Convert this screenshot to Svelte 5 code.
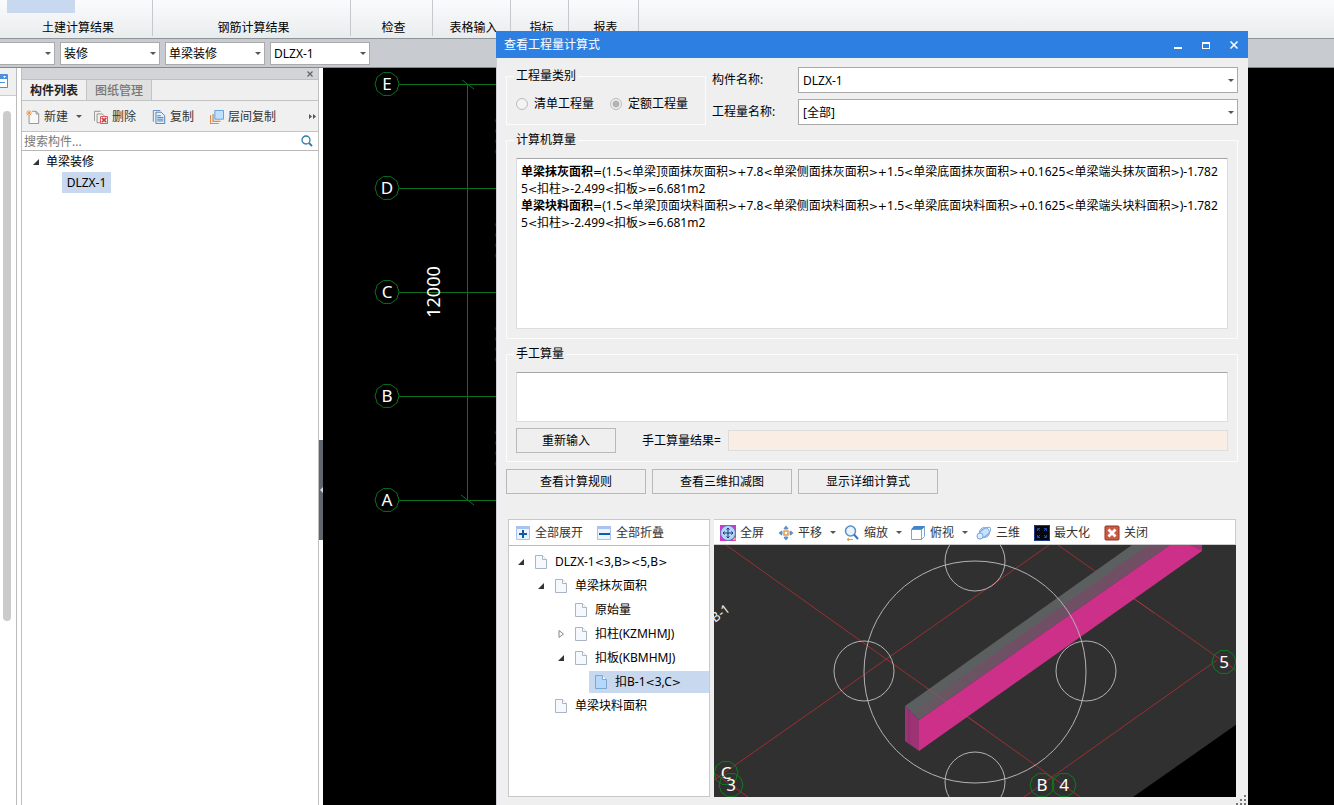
<script lang="ts">
  type Node = { label: string; depth: number; arrow?: 'open' | 'closed'; selected?: boolean };

  const ribbon = [
    { label: '土建计算结果', width: 153, active: true },
    { label: '钢筋计算结果', width: 198 },
    { label: '检查', width: 82 },
    { label: '表格输入', width: 78 },
    { label: '指标', width: 58 },
    { label: '报表', width: 70 },
  ];
  const filters = ['装修', '单梁装修', 'DLZX-1'];

  const formulas = [
    {
      name: '单梁抹灰面积',
      lines: ['=(1.5<单梁顶面抹灰面积>+7.8<单梁侧面抹灰面积>+1.5<单梁底面抹灰面积>+0.1625<单梁端头抹灰面积>)-1.782', '5<扣柱>-2.499<扣板>=6.681m2'],
    },
    {
      name: '单梁块料面积',
      lines: ['=(1.5<单梁顶面块料面积>+7.8<单梁侧面块料面积>+1.5<单梁底面块料面积>+0.1625<单梁端头块料面积>)-1.782', '5<扣柱>-2.499<扣板>=6.681m2'],
    },
  ];

  const nodes: Node[] = [
    { label: 'DLZX-1<3,B><5,B>', depth: 0, arrow: 'open' },
    { label: '单梁抹灰面积', depth: 1, arrow: 'open' },
    { label: '原始量', depth: 2 },
    { label: '扣柱(KZMHMJ)', depth: 2, arrow: 'closed' },
    { label: '扣板(KBMHMJ)', depth: 2, arrow: 'open' },
    { label: '扣B-1<3,C>', depth: 3, selected: true },
    { label: '单梁块料面积', depth: 1 },
  ];

  const panelTools = [
    { id: 'new', label: '新建', menu: true },
    { id: 'delete', label: '删除' },
    { id: 'copy', label: '复制' },
    { id: 'layer', label: '层间复制' },
  ];
  const viewTools = [
    { id: 'full', label: '全屏' },
    { id: 'pan', label: '平移', menu: true },
    { id: 'zoom', label: '缩放', menu: true },
    { id: 'top', label: '俯视', menu: true },
    { id: 'orbit', label: '三维' },
    { id: 'max', label: '最大化' },
    { id: 'close', label: '关闭' },
  ];

  const axes = ['E', 'D', 'C', 'B', 'A'].map((name, i) => ({ name, y: 16 + i * 104 }));
  const pins = [
    { name: 'C', x: 12, y: 228 },
    { name: '3', x: 17, y: 240 },
    { name: 'B', x: 328, y: 240 },
    { name: '4', x: 350, y: 240 },
    { name: '5', x: 510, y: 117 },
  ];

  let category = $state('quota');
  let manual = $state('');

  // operators are set in a wider face than the digits
  const parts = (text: string) => text.split(/([<>+=])/).filter(Boolean);
  const isOp = (part: string) => '<>+='.includes(part);

  // ten-sided axis bubble
  const bubble = (cx: number, cy: number) =>
    Array.from({ length: 10 }, (_, i) => {
      const a = (i * Math.PI) / 5;
      return `${(cx + 12 * Math.cos(a)).toFixed(1)},${(cy + 12 * Math.sin(a)).toFixed(1)}`;
    }).join(' ');
</script>

{#snippet expr(text: string)}{#each parts(text) as part}{#if isOp(part)}<span class="op">{part}</span>{:else}{part}{/if}{/each}{/snippet}

{#snippet twisty(open: boolean)}
  <svg class="twisty" width="8" height="8" viewBox="0 0 8 8">
    {#if open}
      <path d="M7 1v6H1z" fill="#333" />
    {:else}
      <path d="M2 .5v7L6.500 4z" fill="#fff" stroke="#888" />
    {/if}
  </svg>
{/snippet}

{#snippet icon(id: string)}
  <svg class="icon" width="16" height="16" viewBox="0 0 16 16" fill="none">
    {#if id === 'new'}
      <path d="M3.500 6v9.500h11V4.500l-3-3H7" fill="#f8f8f8" stroke="#888" />
      <path d="M11.500 1.500v3h3" stroke="#888" />
      <path d="M3.500 0v7M0 3.500h7M1 1l5 5M6 1L1 6" stroke="#e8954a" />
    {:else if id === 'delete'}
      <path d="M.5 12.500v-11h7M7 14.500H3.500v-10h6l3 3" stroke="#8a8a8a" />
      <path d="M7.500 7.500h8v8h-8z" fill="#fff" stroke="#cf3b3b" />
      <path d="M9 9l5 5M14 9l-5 5" stroke="#cf3b3b" stroke-width="2" />
    {:else if id === 'copy'}
      <path d="M1.500 13.500V.5h8" stroke="#4d7fb5" />
      <path d="M4.500 2.500h6l4 4v9h-10z" fill="#e6f2fd" stroke="#3d74b0" />
      <path d="M6 6.500h4M6 8.500h7M6 10.500h7M6 12.500h7" stroke="#3d74b0" />
    {:else if id === 'layer'}
      <path d="M.5 6v9.500H10M3.500 4.500v8.500H12" stroke="#dc8b4a" stroke-width="1.500" />
      <path d="M5.500.5h10v10h-10z" fill="#bfe0ff" stroke="#5695d8" />
    {:else if id === 'full'}
      <path d="M0 0h16v16H0z" fill="#d435cf" />
      <circle cx="8" cy="8" r="7.500" fill="#b7d3f4" stroke="#5e76b8" />
      <path d="M8 3v10M3 8h10M6.500 4.500L8 3l1.500 1.500M6.500 11.500L8 13l1.500-1.500M4.500 6.500L3 8l1.500 1.500M11.500 6.500L13 8l-1.500 1.500" stroke="#123a7c" />
      <path d="M13 14.500h2v-2" stroke="#ffb04b" stroke-width="1.500" />
    {:else if id === 'pan'}
      <path d="M6 6h4v4H6z" stroke="#e59a4c" stroke-width="1.500" />
      <path d="M8 .5l2.500 3-1 1h-3l-1-1zM8 15.500l2.500-3-1-1h-3l-1 1zM.5 8l3-2.500 1 1v3l-1 1zM15.500 8l-3-2.500-1 1v3l1 1z" fill="#5a90cb" />
    {:else if id === 'zoom'}
      <circle cx="6.500" cy="6" r="5" fill="#e7f3ff" stroke="#5b8dc5" stroke-width="1.500" />
      <path d="M10 9.500l4 4.500" stroke="#3d74b0" stroke-width="2" />
      <path d="M3 14.500h6M5 13l-2 1.500L5 16" stroke="#e59a4c" />
    {:else if id === 'top'}
      <path d="M1.500 4.500h10v10h-10zM11.500 4.500l3-3v10l-3 3" fill="#fff" stroke="#7da6d6" />
      <path d="M1 4.500l3-3.500h11l-3 3.500z" fill="#4383c9" />
    {:else if id === 'orbit'}
      <circle cx="8.500" cy="7.500" r="5" fill="#c6e0ff" stroke="#79a9df" />
      <ellipse cx="8" cy="8" rx="8" ry="3.500" transform="rotate(-38 8 8)" stroke="#79a9df" />
      <circle cx="4" cy="11" r="3" fill="#dcecff" stroke="#79a9df" />
    {:else if id === 'max'}
      <path d="M0 0h16v16H0z" fill="#05070d" />
      <path d="M3.500 6V3.500H6M10 3.500h2.500V6M12.500 10v2.500H10M6 12.500H3.500V10M4 4l2 2M12 4l-2 2M12 12l-2-2M4 12l2-2" stroke="#1f4fb5" />
      <path d="M.5.5h15v15H.5z" stroke="#173a8c" />
    {:else if id === 'close'}
      <rect x="1" y="1" width="14" height="14" rx="1" fill="#cf5a44" stroke="#8e3526" />
      <path d="M4.500 4.500l7 7M11.500 4.500l-7 7" stroke="#fff" stroke-width="2.800" />
    {/if}
  </svg>
{/snippet}

{#snippet page(selected: boolean)}
  <svg class="page" width="14" height="16" viewBox="0 0 14 16">
    <path d="M1.500 1.500h7l4 4v9h-11z" fill={selected ? '#b5d8fa' : '#f5f8fc'} stroke={selected ? '#7ba7d6' : '#a9b4c4'} />
    <path d="M8.500 1.500v4h4" fill="#fff" stroke={selected ? '#7ba7d6' : '#a9b4c4'} />
  </svg>
{/snippet}

<div class="app">
  <header class="ribbon">
    {#each ribbon as group}
      <div class="group" style:width="{group.width}px">
        {#if group.active}<span class="active"></span>{/if}
        <span class="group-name">{group.label}</span>
      </div>
    {/each}
  </header>

  <div class="filters">
    <label class="combo first"><select aria-label="楼层"><option></option></select></label>
    {#each filters as value}
      <label class="combo"><select aria-label={value}><option>{value}</option></select></label>
    {/each}
  </div>

  <main>
    <div class="rail">
      <div class="rail-head">
        <svg width="8" height="14" viewBox="0 0 8 14">
          <path d="M0 .5h7.500v13H0" fill="#fff" stroke="#4b8fdd" />
          <path d="M0 1h7v4H0zM0 8h5v1H0z" fill="#4b8fdd" />
          <path d="M3 2h3L4.500 4z" fill="#fff" />
        </svg>
      </div>
      <div class="thumb"></div>
    </div>

    <aside class="panel">
      <div class="panel-head">
        <button aria-label="关闭">
          <svg width="8" height="8" viewBox="0 0 8 8"><path d="M1.500 1.500l5 5M6.500 1.500l-5 5" stroke="#666" stroke-width="1.300" /></svg>
        </button>
      </div>
      <div class="tabs">
        <button class="tab current">构件列表</button>
        <button class="tab">图纸管理</button>
      </div>
      <div class="tools panel-tools">
        {#each panelTools as tool}
          <button class:menu={tool.menu}>{@render icon(tool.id)}{tool.label}</button>
        {/each}
        <svg class="more" width="8" height="7" viewBox="0 0 8 7"><path d="M0 1l3 2.500L0 6zM4 1l3 2.500L4 6z" fill="#555" /></svg>
      </div>
      <label class="search">
        <input type="text" placeholder="搜索构件..." aria-label="搜索构件" />
        <svg width="12" height="12" viewBox="0 0 12 12" fill="none">
          <circle cx="5" cy="5" r="4" stroke="#2d7dac" stroke-width="1.300" />
          <path d="M8 8l3 3" stroke="#2d7dac" stroke-width="1.800" />
        </svg>
      </label>
      <div class="parts">
        <div class="part-group">{@render twisty(true)}单梁装修</div>
        <div class="part">DLZX-1</div>
      </div>
    </aside>

    <div class="splitter">
      <svg width="4" height="100" viewBox="0 0 4 100"><path d="M0 0h4v100H0z" fill="#5f666e" /><path d="M4 47v6L1 50z" fill="#d5d9dd" /></svg>
    </div>

    <div class="canvas">
      <svg width="100%" height="100%">
        <g stroke="#0b7022" fill="none">
          {#each axes as axis}
            <polygon points={bubble(64, axis.y)} />
            <path d="M76 {axis.y + 0.5}H900" />
          {/each}
          <path d="M144.500 16V432M139 12l12 9M138 427l13 10" />
        </g>
        <g fill="#fff" text-anchor="middle">
          {#each axes as axis, i}
            <text x="64" y={axis.y + 6} font-size="17">{axis.name}</text>
            {#if i < 4}
              <text transform="translate(186 {axis.y + 52}) rotate(-90)" font-size="18">3000</text>
            {/if}
          {/each}
          <text transform="translate(117 224) rotate(-90)" font-size="18">12000</text>
        </g>
      </svg>
    </div>
  </main>

  <section class="dialog" role="dialog" aria-label="查看工程量计算式">
    <div class="title">
      <span>查看工程量计算式</span>
      <button aria-label="最小化"><svg width="10" height="10" viewBox="0 0 10 10"><path d="M1 7h8v2H1z" fill="#fff" /></svg></button>
      <button aria-label="最大化"><svg width="10" height="10" viewBox="0 0 10 10"><path d="M1 2h8v7H1zm1 2v4h6V4z" fill="#fff" fill-rule="evenodd" /></svg></button>
      <button aria-label="关闭"><svg width="10" height="10" viewBox="0 0 10 10"><path d="M1.500 1.500l7 7M8.500 1.500l-7 7" stroke="#fff" stroke-width="1.500" /></svg></button>
    </div>

    <div class="body">
      <div class="top">
        <fieldset class="kind" disabled>
          <legend>工程量类别</legend>
          <div class="radios">
            <label><input type="radio" name="kind" value="bill" bind:group={category} />清单工程量</label>
            <label><input type="radio" name="kind" value="quota" bind:group={category} />定额工程量</label>
          </div>
        </fieldset>
        <div class="fields">
          <label for="part-name">构件名称:</label>
          <span class="combo"><select id="part-name"><option>DLZX-1</option></select></span>
          <label for="qty-name">工程量名称:</label>
          <span class="combo"><select id="qty-name"><option>[全部]</option></select></span>
        </div>
      </div>

      <fieldset class="auto">
        <legend>计算机算量</legend>
        <div class="formulas">
          {#each formulas as formula}
            <p><b>{formula.name}</b>{@render expr(formula.lines[0])}<br />{@render expr(formula.lines[1])}</p>
          {/each}
        </div>
      </fieldset>

      <fieldset class="manual">
        <legend>手工算量</legend>
        <textarea aria-label="手工算量" bind:value={manual}></textarea>
        <div class="result">
          <button class="push" onclick={() => (manual = '')}>重新输入</button>
          <label for="manual-result">手工算量结果=</label>
          <input id="manual-result" type="text" readonly />
        </div>
      </fieldset>

      <div class="actions">
        <button class="push">查看计算规则</button>
        <button class="push">查看三维扣减图</button>
        <button class="push">显示详细计算式</button>
      </div>

      <div class="bottom">
        <div class="tree">
          <div class="tree-tools">
            <button>
              <svg width="14" height="14" viewBox="0 0 14 14"><path d="M.5.5h13v13H.5z" fill="#eaf2fd" stroke="#aac3ee" /><path d="M0 0h14v3H0z" fill="#aac3ee" /><path d="M6 4h2v3h3v2H8v3H6V9H3V7h3z" fill="#0b5ba5" /></svg>全部展开
            </button>
            <button>
              <svg width="14" height="14" viewBox="0 0 14 14"><path d="M.5.5h13v13H.5z" fill="#eaf2fd" stroke="#aac3ee" /><path d="M0 0h14v3H0z" fill="#aac3ee" /><path d="M2 7h11v2H2z" fill="#0b5ba5" /></svg>全部折叠
            </button>
          </div>
          <div class="nodes">
            {#each nodes as node}
              <div class="node" style:padding-left="{8 + node.depth * 20}px">
                {#if node.arrow}{@render twisty(node.arrow === 'open')}{:else}<span class="twisty"></span>{/if}
                <span class="node-label" class:selected={node.selected}>
                  {@render page(!!node.selected)}<span>{@render expr(node.label)}</span>
                </span>
              </div>
            {/each}
          </div>
        </div>

        <div class="view">
          <div class="tools view-tools">
            {#each viewTools as tool}
              <button class:menu={tool.menu}>{@render icon(tool.id)}{tool.label}</button>
            {/each}
          </div>
          <div class="scene">
            <svg width="100%" height="100%">
              <defs>
                <linearGradient id="tint" x1="0" y1="1" x2="1" y2="0">
                  <stop offset="0" stop-color="#a02b73" stop-opacity="0.1" />
                  <stop offset="0.4" stop-color="#a02b73" stop-opacity="0.3" />
                </linearGradient>
              </defs>
              <path d="M1200-295L419 252H1200z" fill="#000" />
              <g stroke="#9c2e33" fill="none">
                <path d="M12 0L366 252M335 0L0 235M344 0L540 138M310 252L503 115M0 228l34 24" />
              </g>
              <path d="M191 161L418 0h38L205 175z" fill="#5c5f5f" />
              <path d="M200 166L434 0h22L205 175z" fill="url(#tint)" />
              <path d="M191 161l14 14v31l-14-10z" fill="#9d3375" />
              <path d="M195 165v34" stroke="#80306a" />
              <path d="M205 175L456 0h32v6L205 206z" fill="#cd3088" />
              <path d="M475 0h13v6z" fill="#a82f78" />
              <path d="M213 143L271 184M400 40L440 68" stroke="#d84a72" stroke-opacity="0.3" />
              <g stroke="#b4b4b4" fill="none">
                <circle cx="261" cy="127" r="111" />
                <circle cx="261" cy="16" r="30" />
                <circle cx="150" cy="126" r="30" />
                <circle cx="372" cy="126" r="30" />
                <circle cx="261" cy="237" r="30" />
              </g>
              {#each pins as pin}
                <polygon points={bubble(pin.x, pin.y)} fill="none" stroke="#0d7d1c" />
                <text x={pin.x} y={pin.y + 6} font-size="17" text-anchor="middle" fill="#fff">{pin.name}</text>
              {/each}
              <text transform="translate(1 78) rotate(-38)" font-size="13" fill="#eee">B-1</text>
            </svg>
          </div>
        </div>
      </div>
    </div>
    <svg class="grip" width="10" height="10" viewBox="0 0 10 10"><path d="M8 0h2v2H8zM8 4h2v2H8zM4 4h2v2H4zM8 8h2v2H8zM4 8h2v2H4zM0 8h2v2H0z" fill="#777" /></svg>
  </section>
</div>

<style>
  :global(body) { margin: 0; }
  .app {
    position: relative; display: flex; flex-direction: column; height: 100vh; overflow: hidden;
    background: #fff; color: #000;
    font-family: 'Noto Sans', 'Noto Sans CJK SC', sans-serif; font-size: 12px; line-height: 16px;
  }
  .app * { box-sizing: border-box; }
  button, input, select, textarea { font: inherit; color: inherit; margin: 0; }
  button { display: flex; align-items: center; padding: 0; border: 0; background: none; white-space: nowrap; }
  svg { display: block; flex-shrink: 0; }
  p { margin: 0; }

  .ribbon {
    display: flex; flex-shrink: 0; height: 39px;
    background: linear-gradient(#fafbfc, #e9eced); border-bottom: 1px solid #8f9499;
  }
  .group {
    display: flex; flex-direction: column; justify-content: flex-end; align-items: center;
    height: 36px; padding-left: 4px; border-right: 1px solid #c6c9cc;
  }
  .active { width: 68px; height: 13px; margin: 0 auto auto 3px; background: #c8d8ef; }

  .filters {
    display: flex; flex-shrink: 0; align-items: center; gap: 5px; height: 29px;
    background: #c8cbcf; border-bottom: 1px solid #85898e;
  }
  .combo { position: relative; display: block; }
  .combo::after {
    content: ''; position: absolute; right: 4px; top: 50%; margin-top: -1px; pointer-events: none;
    border: 3px solid transparent; border-top-color: #555; border-bottom: 0;
  }
  .combo select {
    display: block; width: 100%; height: 26px; padding: 1px 12px 0 4px; appearance: none;
    background: #fff; border: 1px solid #aaa; border-radius: 0;
  }
  .filters .combo { width: 100px; }
  .filters .combo select { height: 23px; padding-left: 3px; }
  .filters .first { width: 55px; }
  .filters .first select { border-left: 0; }

  main { display: flex; flex: 1; min-height: 0; }
  .rail { width: 17px; border-right: 1px solid #bbb; }
  .rail-head { height: 28px; padding-top: 6px; background: #f0f0f0; border-bottom: 1px solid #ccc; }
  .thumb { width: 8px; height: 510px; margin: 15px 0 0 3px; border-radius: 4px; background: #cbcbcb; }

  .panel {
    display: flex; flex-direction: column; flex-shrink: 0; width: 298px; margin-left: 4px;
    border: 1px solid #bfbfbf; border-width: 0 1px;
  }
  .panel-head {
    display: flex; justify-content: flex-end; align-items: center; height: 12px; padding-right: 4px;
    background: #d2d4d8; border-bottom: 1px solid #bfbfbf;
  }
  .tabs { display: flex; height: 21px; background: #efefef; border-bottom: 1px solid #c4c4c4; }
  .tab { justify-content: center; width: 65px; padding-top: 1px; background: #e0e0e0; border-right: 1px solid #c4c4c4; color: #777; font-weight: 500; }
  .tab.current { background: #f0f0f0; color: #222; font-weight: 700; }

  .tools { display: flex; align-items: center; color: #333; }
  .tools button { gap: 4px; }
  .tools .menu::after { content: ''; margin-left: 4px; border: 3px solid transparent; border-top-color: #555; border-bottom: 0; }
  .panel-tools { gap: 12px; height: 31px; padding: 1px 1px 0 4px; background: #f0f0f0; border-bottom: 1px solid #c4c4c4; }
  .panel-tools .icon { width: 14px; height: 14px; }
  .panel-tools button:not(.menu) { padding-right: 4px; }
  .more { margin-left: auto; }

  .search { display: flex; align-items: center; height: 19px; padding-right: 5px; border-bottom: 1px solid #b8b8b8; }
  .search input { flex: 1; min-width: 0; height: 18px; padding: 1px 2px 0; border: 0; outline: 0; background: none; }
  .search input::placeholder { color: #777; opacity: 1; }
  .part-group { display: flex; align-items: center; gap: 6px; height: 21px; padding-left: 10px; }
  .part { display: flex; align-items: center; justify-content: center; width: 49px; height: 21px; margin-left: 40px; background: #c8d8ef; }

  .splitter { display: flex; flex-shrink: 0; width: 4px; padding-top: 372px; }
  .canvas { flex: 1; min-width: 0; background: #000; overflow: hidden; }

  /* floating window over the drawing */
  .dialog {
    position: absolute; left: 496px; top: 31px; bottom: 0; width: 752px;
    display: flex; flex-direction: column; background: #efefef;
  }
  .title { display: flex; flex-shrink: 0; height: 27px; background: #2d80e2; color: #fff; }
  .title span { flex: 1; padding-left: 8px; line-height: 27px; }
  .title button { justify-content: center; width: 28px; }
  .body { display: flex; flex-direction: column; flex: 1; min-height: 0; padding: 9px 10px 8px 9px; border-left: 1px solid #ccd0d5; }

  fieldset { min-width: 0; margin: 0; padding: 0 9px; border: 1px solid #fcfcfc; }
  legend { height: 16px; margin-left: -2px; padding: 0 2px; }
  .top { display: flex; gap: 6px; height: 58px; }
  .kind { flex-shrink: 0; width: 200px; margin-top: 1px; }
  .radios { display: flex; gap: 16px; height: 40px; align-items: center; white-space: nowrap; }
  .radios label { display: flex; align-items: center; gap: 6px; }
  .radios input { appearance: none; width: 12px; height: 12px; border: 1px solid #bbb; border-radius: 50%; background: #f3f3f3; }
  .radios input:checked { background: radial-gradient(circle, #b4b4b4 3px, #f3f3f3 4px); }
  .fields { display: grid; flex: 1; grid-template-columns: 80px 1fr; grid-auto-rows: 26px; row-gap: 6px; column-gap: 6px; align-items: center; }

  .auto { margin-top: 7px; padding-top: 10px; padding-bottom: 9px; }
  .formulas {
    height: 171px; padding: 4px; overflow: hidden; line-height: 17px; white-space: nowrap;
    background: #fff; border: 1px solid #ddd; border-top-color: #a6a6a6;
  }
  .op { font-family: 'DejaVu Sans', sans-serif; font-size: 11px; line-height: 1; }

  .manual { margin-top: 7px; padding-top: 10px; padding-bottom: 8px; }
  textarea { display: block; width: 100%; height: 50px; resize: none; background: #fff; border: 1px solid #ddd; border-top-color: #a6a6a6; border-radius: 0; }
  .result { display: flex; align-items: center; margin-top: 6px; }
  .push { justify-content: center; width: 140px; height: 25px; border: 1px solid #b9b9b9; }
  .result .push { width: 100px; }
  .result label { width: 86px; margin-left: 26px; }
  .result input { flex: 1; min-width: 0; height: 21px; background: #faeee4; border: 1px solid #ddd; }
  .actions { display: flex; gap: 6px; margin: 7px 0 25px; }

  .bottom { display: flex; flex: 1; gap: 4px; min-height: 0; padding: 0 2px; }
  .tree { width: 202px; background: #fff; border: 1px solid #c8c8c8; }
  .tree-tools { display: flex; align-items: center; gap: 14px; height: 26px; padding-left: 7px; color: #333; border-bottom: 1px solid #bbb; }
  .tree-tools button { gap: 5px; }
  .nodes { padding-top: 4px; }
  .node { display: flex; align-items: center; gap: 4px; height: 24px; }
  .twisty { width: 8px; height: 8px; }
  .node-label { display: flex; flex: 1; align-items: center; gap: 7px; height: 22px; padding-left: 5px; white-space: nowrap; }
  .selected { background: #c8d8ef; }

  .view { display: flex; flex-direction: column; flex: 1; min-width: 0; }
  .view-tools { gap: 8px; height: 26px; padding: 1px 0 0 6px; background: #fff; border: 1px solid #ccc; border-left: 0; }
  .view-tools button:not(.menu) { padding-right: 6px; }
  .scene { flex: 1; min-height: 0; background: #303030; overflow: hidden; }
  .grip { position: absolute; right: 2px; bottom: 0; }
</style>
